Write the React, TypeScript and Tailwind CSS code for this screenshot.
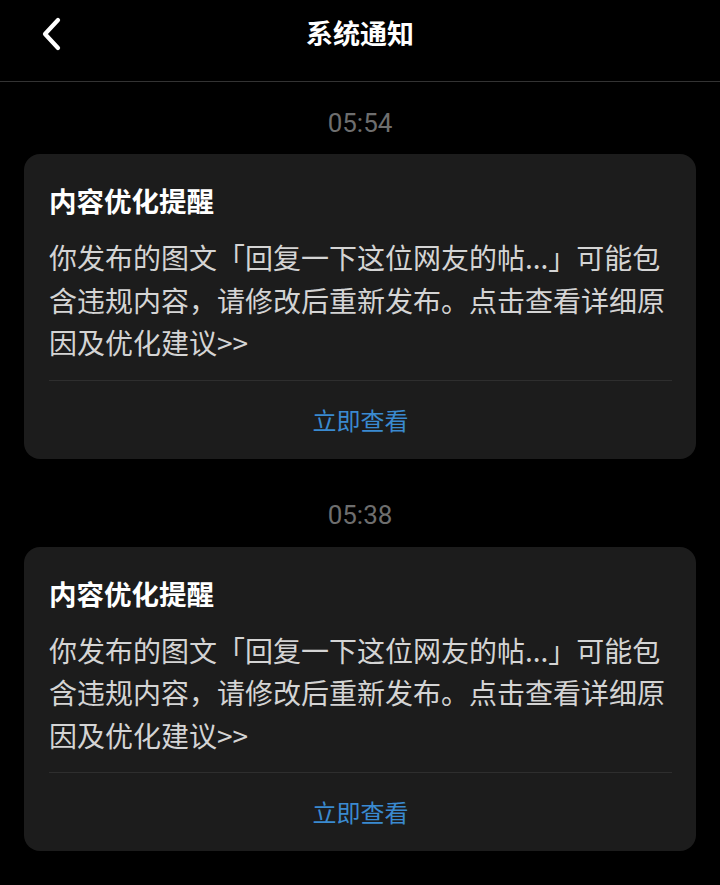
import React from "react";

const font = { fontFamily: '"Noto Sans CJK SC", "Noto Sans", sans-serif' };

function Card({ time }: { time: string }) {
  return (
    <div className="flex flex-col">
      <div className="h-[30px] flex items-center justify-center text-[26px] text-[#6e6e6e]" style={{ fontFamily: 'Roboto, "Noto Sans", sans-serif' }}>
        {time}
      </div>
      <div className="mt-[16px] mx-[24px] rounded-[16px] bg-[#1c1c1c] pl-[25px] pr-[24px] pt-[28px] flex flex-col">
        <div className="text-[27.5px] leading-[36px] font-bold text-white">内容优化提醒</div>
        <div className="mt-[18px] text-[28px] leading-[42.5px] text-[#d4d4d4]">
          你发布的图文「回复一下这位网友的帖...」可能包含违规内容，请修改后重新发布。点击查看详细原因及优化建议&gt;&gt;
        </div>
        <div className="mt-[16px] h-px bg-[#2e2e2e]" />
        <div className="h-[78px] flex items-center justify-center text-[24px] text-[#3a8ad0]">立即查看</div>
      </div>
    </div>
  );
}

export default function App() {
  return (
    <div className="w-[720px] h-[885px] bg-black overflow-hidden" style={font}>
      <div className="relative h-[82px] border-b border-[#333333] flex items-start justify-center">
        <div className="h-[66px] flex items-center text-[27px] font-bold text-white">系统通知</div>
        <svg className="absolute left-[38px] top-[16px]" width="28" height="36" viewBox="0 0 28 36">
          <path d="M20 4 L7 18 L20 32" fill="none" stroke="white" strokeWidth="4.2" strokeLinecap="round" strokeLinejoin="round" />
        </svg>
      </div>
      <div className="pt-[26px]">
        <Card time="05:54" />
      </div>
      <div className="pt-[42px]">
        <Card time="05:38" />
      </div>
    </div>
  );
}
